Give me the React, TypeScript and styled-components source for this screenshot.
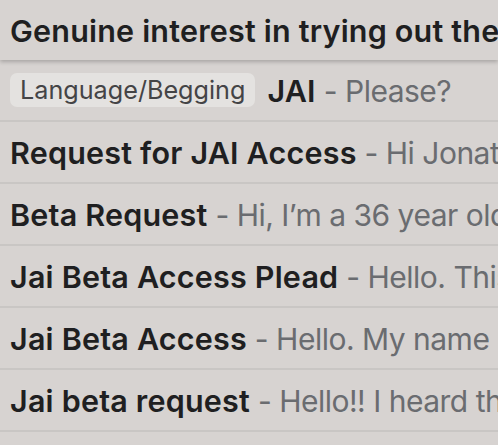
import React from "react";
import styled, { createGlobalStyle } from "styled-components";

const GlobalStyle = createGlobalStyle`
  html, body {
    margin: 0;
    padding: 0;
    background: #d7d3d1;
  }
  body {
    font-family: "Inter", "Roboto", "Liberation Sans", sans-serif;
    overflow: hidden;
  }
`;

const List = styled("div")`
  width: 498px;
  height: 445px;
  overflow: hidden;
  background: #d7d3d1;
`;

const Header = styled("div")`
  position: relative;
  z-index: 1;
  height: 60px;
  display: flex;
  align-items: center;
  padding: 0 10px;
  background: #d7d3d1;
  box-shadow: 0 2px 4px rgba(0, 0, 0, 0.22);
  white-space: nowrap;
  overflow: hidden;
  font-size: 30.5px;
  font-weight: 600;
  letter-spacing: 0.2px;
  color: #1f1f21;
`;

const Row = styled("div")`
  height: 60px;
  display: flex;
  align-items: center;
  gap: 12px;
  padding: 0 10px;
  border-bottom: 2px solid #c9c6c4;
  white-space: nowrap;
  overflow: hidden;
  font-size: 30.5px;
  letter-spacing: 0.2px;
`;

const Chip = styled("span")`
  flex: none;
  display: inline-flex;
  align-items: center;
  height: 34px;
  padding: 0 10px;
  border-radius: 7px;
  background: #e4e2e0;
  color: #444446;
  font-size: 25.2px;
  font-weight: 400;
  letter-spacing: 0;
`;

const Subject = styled("span")`
  font-weight: 600;
  color: #1f1f21;
`;

const Snippet = styled("span")`
  font-weight: 400;
  font-size: 30px;
  letter-spacing: -0.5px;
  color: #6a6c70;
`;

const Line = styled("span")`
  white-space: nowrap;
`;

const emails = [
  { subject: "JAI", snippet: "Please?", label: "Language/Begging" },
  { subject: "Request for JAI Access", snippet: "Hi Jonathan, I hope this finds you well" },
  { subject: "Beta Request", snippet: "Hi, I\u2019m a 36 year old developer" },
  { subject: "Jai Beta Access Plead", snippet: "Hello. This is a request" },
  { subject: "Jai Beta Access", snippet: "Hello. My name is" },
  { subject: "Jai beta request", snippet: "Hello!! I heard that you" },
  { subject: "Access to the beta", snippet: "Hi there" },
];

const App = () => {
  return (
    <List>
      <GlobalStyle />
      <Header>Genuine interest in trying out the Jai beta</Header>
      {emails.map((e, i) => (
        <Row key={i}>
          {e.label ? <Chip>{e.label}</Chip> : null}
          <Line>
            <Subject>{e.subject}</Subject>
            <Snippet> - {e.snippet}</Snippet>
          </Line>
        </Row>
      ))}
    </List>
  );
};

export default App;
